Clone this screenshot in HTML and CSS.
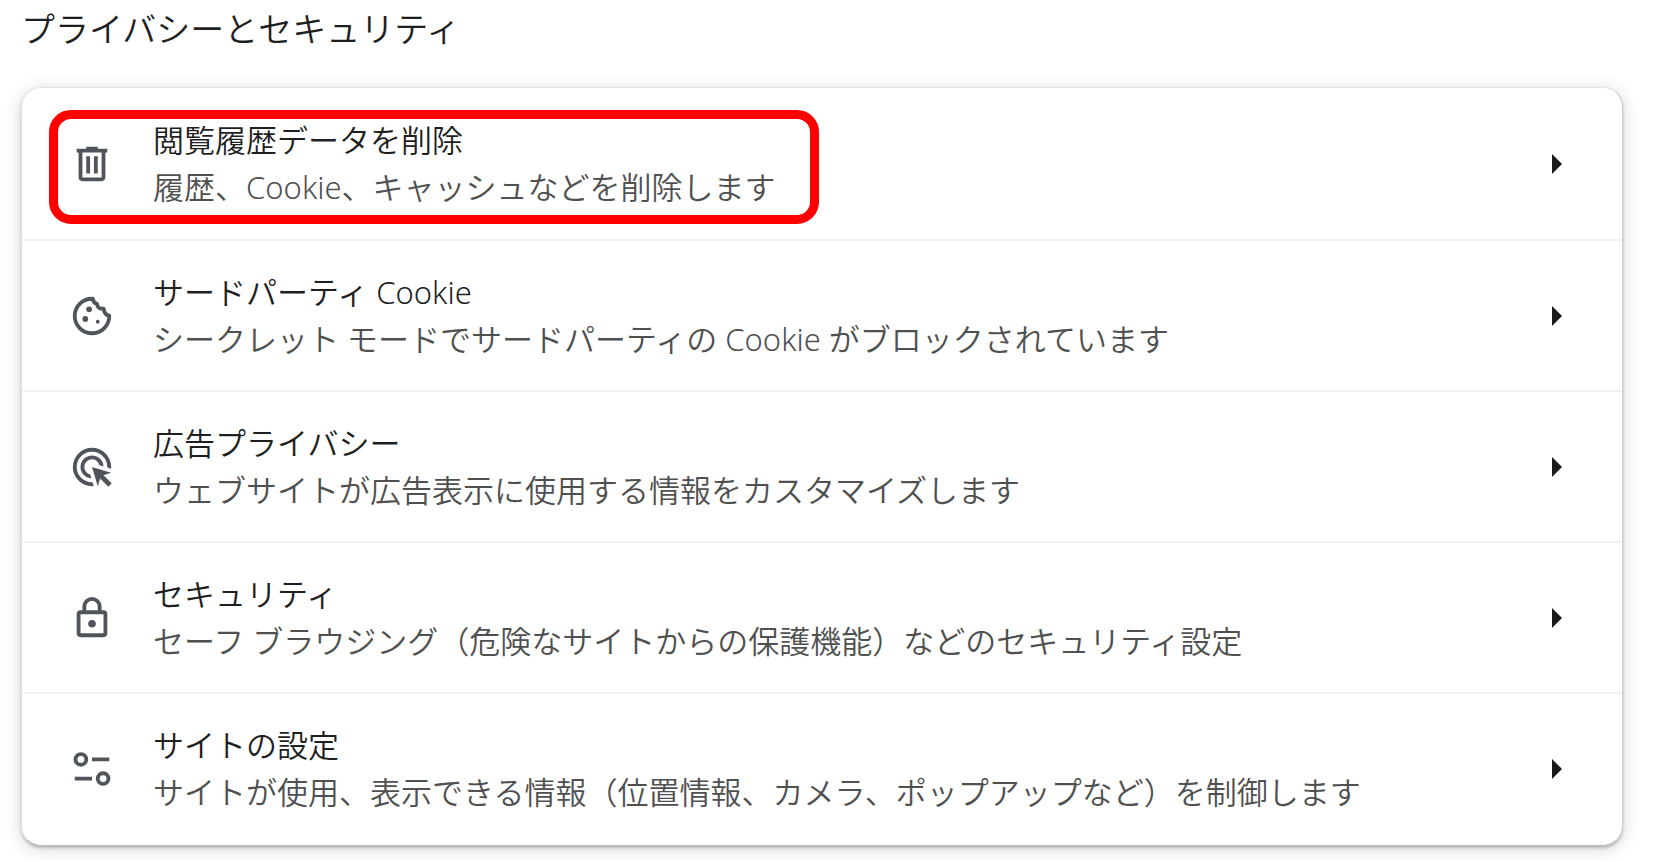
FILE: index.html
```html
<!DOCTYPE html>
<html lang="ja">
<head>
<meta charset="utf-8">
<meta name="viewport" content="width=device-width, initial-scale=1">
<title>プライバシーとセキュリティ</title>
<link rel="stylesheet" href="styles.css">
</head>
<body>
<main class="section">
  <h1 class="section-title">プライバシーとセキュリティ</h1>
  <div class="card">
    <button class="row highlighted" type="button">
      <svg class="icon" viewBox="0 0 24 24" aria-hidden="true"><path d="M7 21q-.83 0-1.41-.59Q5 19.83 5 19V6H4V4h5V3h6v1h5v2h-1v13q0 .83-.59 1.41Q17.83 21 17 21ZM17 6H7v13h10ZM9 17h2V8H9Zm4 0h2V8h-2Z"/></svg>
      <span class="text"><span class="label">閲覧履歴データを削除</span><span class="detail">履歴、Cookie、キャッシュなどを削除します</span></span>
      <svg class="arrow" viewBox="0 0 10 20" aria-hidden="true"><path d="M0 0 10 10 0 20Z"/></svg>
    </button>
    <button class="row" type="button">
      <svg class="icon" viewBox="0 0 24 24" aria-hidden="true"><path class="line" d="M12.4 3A9 9 0 1 0 21 11.8Q18.4 11.4 18.1 8.2Q14.8 8.5 14.6 5.7Q12.6 5 12.4 3Z"/><circle cx="10.5" cy="8.5" r="1.5"/><circle cx="8.5" cy="13.5" r="1.5"/><circle cx="15" cy="15" r="1"/></svg>
      <span class="text"><span class="label">サードパーティ Cookie</span><span class="detail">シークレット モードでサードパーティの Cookie がブロックされています</span></span>
      <svg class="arrow" viewBox="0 0 10 20" aria-hidden="true"><path d="M0 0 10 10 0 20Z"/></svg>
    </button>
    <button class="row" type="button">
      <svg class="icon" viewBox="0 0 24 24" aria-hidden="true"><path d="M11.7 17.99A6 6 0 1 1 17.99 11.7L15.89 11.07A4 4 0 1 0 11.07 15.89ZM22 12q0 .45-.04.9L20 12.3V12A8 8 0 1 0 12 20h.3l.6 1.96q-.45.04-.9.04A10 10 0 1 1 22 12ZM20.53 22.25 16.25 18 15 22 12 12l10 3-4 1.25 4.28 4.28Z"/></svg>
      <span class="text"><span class="label">広告プライバシー</span><span class="detail">ウェブサイトが広告表示に使用する情報をカスタマイズします</span></span>
      <svg class="arrow" viewBox="0 0 10 20" aria-hidden="true"><path d="M0 0 10 10 0 20Z"/></svg>
    </button>
    <button class="row" type="button">
      <svg class="icon" viewBox="0 0 24 24" aria-hidden="true"><path d="M18 8h-1V6A5 5 0 0 0 7 6v2H6a2 2 0 0 0-2 2v10a2 2 0 0 0 2 2h12a2 2 0 0 0 2-2V10a2 2 0 0 0-2-2ZM9 6a3 3 0 0 1 6 0v2H9Zm9 14H6V10h12Zm-6-3a2 2 0 1 0 0-4 2 2 0 0 0 0 4Z"/></svg>
      <span class="text"><span class="label">セキュリティ</span><span class="detail">セーフ ブラウジング（危険なサイトからの保護機能）などのセキュリティ設定</span></span>
      <svg class="arrow" viewBox="0 0 10 20" aria-hidden="true"><path d="M0 0 10 10 0 20Z"/></svg>
    </button>
    <button class="row" type="button">
      <svg class="icon" viewBox="0 0 24 24" aria-hidden="true"><circle class="line" cx="6.2" cy="7" r="2.8"/><circle class="line" cx="17.8" cy="17" r="2.8"/><path d="M12 6h9v2h-9ZM3 16h9v2H3Z"/></svg>
      <span class="text"><span class="label">サイトの設定</span><span class="detail">サイトが使用、表示できる情報（位置情報、カメラ、ポップアップなど）を制御します</span></span>
      <svg class="arrow" viewBox="0 0 10 20" aria-hidden="true"><path d="M0 0 10 10 0 20Z"/></svg>
    </button>
  </div>
</main>
</body>
</html>
```
FILE: styles.css
```css
*, *::after { box-sizing: border-box; }
body {
  margin: 0;
  background: #fff;
  color: #1f1f1f;
  font-family: "Noto Sans", "Noto Sans CJK JP", sans-serif;
}
.section { padding: 5px 38px 14px 21px; }
.section-title {
  margin: 0 0 34px;
  font-size: 34px;
  line-height: 48px;
  font-weight: 350;
}
.card {
  padding-bottom: 2px;
  border: 1px solid #e2e2e2;
  border-right-color: #ccc;
  border-bottom-color: #bbb;
  border-radius: 20px;
  background: #fff;
  box-shadow: 0 2px 3px rgba(0, 0, 0, .2), 0 3px 18px rgba(0, 0, 0, .16);
}
.row {
  position: relative;
  display: flex;
  align-items: center;
  width: 100%;
  min-height: 151px;
  padding: 0 60px 0 47px;
  border: 0;
  background: none;
  color: inherit;
  font: inherit;
  font-weight: 350;
  text-align: left;
  cursor: pointer;
}
.row + .row { border-top: 2px solid #f1f1f1; }
.icon {
  flex: none;
  width: 46px;
  height: 46px;
  margin-right: 38px;
  fill: #50555c;
}
.line {
  fill: none;
  stroke: #50555c;
  stroke-width: 2;
  stroke-linejoin: round;
}
.text {
  display: flex;
  flex: 1;
  flex-direction: column;
  font-size: 31px;
  line-height: 47px;
}
.detail { color: #505050; }
.arrow {
  flex: none;
  width: 10px;
  height: 20px;
  fill: #1b1b1b;
}
/* Callout frame around the first entry */
.highlighted::after {
  content: "";
  position: absolute;
  top: 22px;
  left: 27px;
  width: 770px;
  height: 114px;
  border: 9px solid #f00;
  border-radius: 22px;
  pointer-events: none;
}
```
